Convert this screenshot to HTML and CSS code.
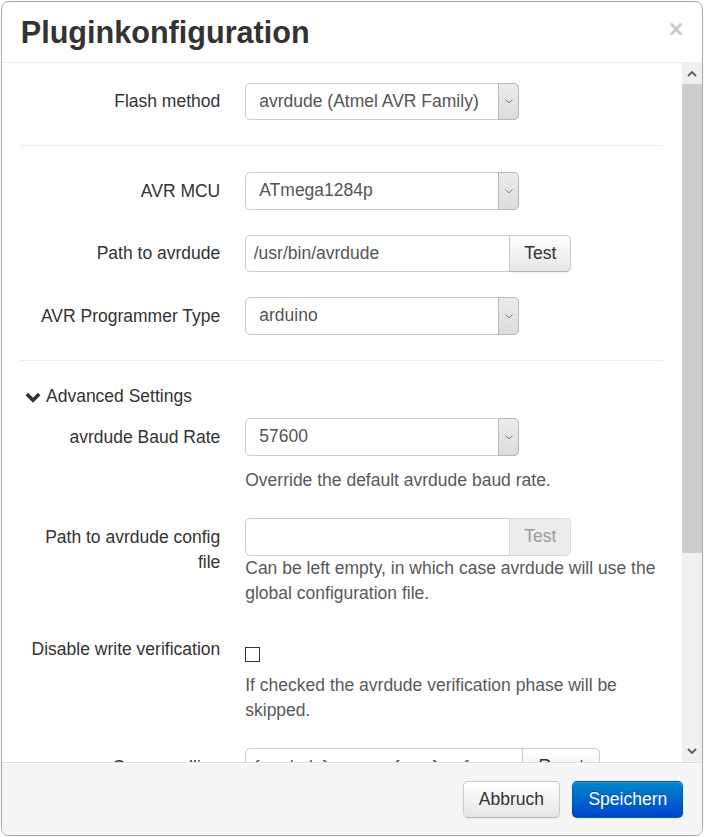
FILE: index.html
```html
<!DOCTYPE html>
<html lang="de">
<head>
<meta charset="utf-8">
<title>Pluginkonfiguration</title>
<link rel="stylesheet" href="styles.css">
</head>
<body>
<div class="modal">
  <div class="modal-header">
    <h3 class="modal-title">Pluginkonfiguration</h3>
    <button class="close" type="button">×</button>
  </div>

  <div class="modal-body">
    <div class="body-content">
      <form class="form-horizontal">
        <div class="control-group">
          <label class="control-label">Flash method</label>
          <div class="controls">
            <div class="select">
              <span class="select-value">avrdude (Atmel AVR Family)</span>
              <span class="select-arrow"><svg width="8" height="5" viewBox="0 0 8 5"><path d="M0.5 0.5 L4 4 L7.5 0.5" fill="none" stroke="#7d7d7d" stroke-width="1"/></svg></span>
            </div>
          </div>
        </div>

        <hr>

        <div class="control-group">
          <label class="control-label">AVR MCU</label>
          <div class="controls">
            <div class="select">
              <span class="select-value">ATmega1284p</span>
              <span class="select-arrow"><svg width="8" height="5" viewBox="0 0 8 5"><path d="M0.5 0.5 L4 4 L7.5 0.5" fill="none" stroke="#7d7d7d" stroke-width="1"/></svg></span>
            </div>
          </div>
        </div>

        <div class="control-group">
          <label class="control-label">Path to avrdude</label>
          <div class="controls">
            <div class="input-append">
              <input class="input" type="text" value="/usr/bin/avrdude">
              <button class="btn" type="button">Test</button>
            </div>
          </div>
        </div>

        <div class="control-group">
          <label class="control-label">AVR Programmer Type</label>
          <div class="controls">
            <div class="select">
              <span class="select-value">arduino</span>
              <span class="select-arrow"><svg width="8" height="5" viewBox="0 0 8 5"><path d="M0.5 0.5 L4 4 L7.5 0.5" fill="none" stroke="#7d7d7d" stroke-width="1"/></svg></span>
            </div>
          </div>
        </div>

        <hr>

        <div class="advanced-toggle">
          <svg class="toggle-icon" width="16" height="11" viewBox="0 0 16 11"><path d="M1.8 2 L8 8.2 L14.2 2" fill="none" stroke="#333" stroke-width="3.6"/></svg>
          <span>Advanced Settings</span>
        </div>

        <div class="control-group">
          <label class="control-label">avrdude Baud Rate</label>
          <div class="controls">
            <div class="select">
              <span class="select-value">57600</span>
              <span class="select-arrow"><svg width="8" height="5" viewBox="0 0 8 5"><path d="M0.5 0.5 L4 4 L7.5 0.5" fill="none" stroke="#7d7d7d" stroke-width="1"/></svg></span>
            </div>
            <span class="help help-after-select">Override the default avrdude baud rate.</span>
          </div>
        </div>

        <div class="control-group">
          <label class="control-label">Path to avrdude config file</label>
          <div class="controls">
            <div class="input-append">
              <input class="input" type="text" value="">
              <button class="btn" type="button" disabled>Test</button>
            </div>
            <span class="help">Can be left empty, in which case avrdude will use the global configuration file.</span>
          </div>
        </div>

        <div class="control-group">
          <label class="control-label">Disable write verification</label>
          <div class="controls controls-check">
            <input class="checkbox" type="checkbox">
            <span class="help help-after-check">If checked the avrdude verification phase will be skipped.</span>
          </div>
        </div>

        <div class="control-group">
          <label class="control-label">Commandline</label>
          <div class="controls">
            <div class="input-append">
              <input class="input input-wide" type="text" value="{avrdude} -v -q -p {mcu} -c {programmer} -P {port} -D -C {conffile} -b {baudrate} {disableverify} -U flash:w:{firmware}:i">
              <button class="btn btn-reset" type="button">Reset</button>
            </div>
          </div>
        </div>
      </form>
    </div>

    <div class="scrollbar">
      <div class="sb-btn"><svg width="10" height="6" viewBox="0 0 10 6"><path d="M1 5 L5 1 L9 5" fill="none" stroke="#5f5f5f" stroke-width="1.8"/></svg></div>
      <div class="sb-track"><div class="sb-thumb"></div></div>
      <div class="sb-btn sb-btn-down"><svg width="10" height="6" viewBox="0 0 10 6"><path d="M1 1 L5 5 L9 1" fill="none" stroke="#5f5f5f" stroke-width="1.8"/></svg></div>
    </div>
  </div>

  <div class="modal-footer">
    <button class="btn" type="button">Abbruch</button>
    <button class="btn btn-primary" type="button">Speichern</button>
  </div>
</div>
</body>
</html>
```

FILE: styles.css
```css
html, body {
  margin: 0;
  height: 100%;
  overflow: hidden;
  background: #fff;
}

body {
  font-family: "Liberation Sans", Arial, Helvetica, sans-serif;
  font-size: 17.5px;
  line-height: 25px;
  color: #333;
}

/* dialog window */
.modal {
  box-sizing: border-box;
  width: 702px;
  margin: 1px 0 0 1px;
  background: #fff;
  border: 1px solid #a5a5a5;
  border-radius: 7.5px;
  overflow: hidden;
}

.modal-header {
  display: flex;
  justify-content: space-between;
  align-items: flex-start;
  padding: 11.25px 18.75px;
  border-bottom: 1px solid #eee;
}

.modal-title {
  margin: 1px 0 -1px;
  font-size: 30.6px;
  line-height: 37.5px;
  font-weight: bold;
  color: #333;
}

.close {
  margin-top: 4px;
  padding: 0;
  border: 0;
  background: none;
  font-family: "Liberation Sans", Arial, sans-serif;
  font-size: 25px;
  line-height: 25px;
  font-weight: bold;
  color: #000;
  opacity: 0.2;
}

/* scrolling body */
.modal-body {
  display: flex;
  height: 699px;
}

.body-content {
  flex: 1;
  min-width: 0;
  overflow: hidden;
  padding: 19.75px 18.75px 18.75px 18.25px;
}

.form-horizontal {
  margin: 0;
}

.scrollbar {
  width: 20px;
  display: flex;
  flex-direction: column;
  background: #f0f0f0;
}

.sb-btn {
  height: 21px;
  display: flex;
  align-items: center;
  justify-content: center;
}

.sb-btn-down {
  height: 22px;
}

.sb-track {
  flex: 1;
}

.sb-thumb {
  height: 469px;
  background: #cdcdcd;
}

hr {
  margin: 25px 0;
  border: 0;
  border-top: 1px solid #eee;
  border-bottom: 1px solid #fff;
}

/* form rows */
.control-group {
  display: grid;
  grid-template-columns: 200px 1fr;
  column-gap: 25px;
  margin-bottom: 25px;
}

.control-label {
  padding-top: 6.25px;
  text-align: right;
}

.controls {
  min-width: 0;
}

.select {
  box-sizing: border-box;
  width: 274px;
  height: 37.5px;
  display: flex;
  border: 1px solid #ccc;
  border-radius: 5px;
  background: #fff;
  color: #555;
}

.select-value {
  flex: 1;
  padding-left: 13px;
  line-height: 35.5px;
  white-space: nowrap;
  overflow: hidden;
}

.select-arrow {
  box-sizing: border-box;
  width: 21px;
  margin: -1px -1px -1px 0;
  display: flex;
  align-items: center;
  justify-content: center;
  border: 1px solid #b7b7b7;
  border-radius: 0 5px 5px 0;
  background: linear-gradient(#ececec, #dcdcdc);
}

.input-append {
  display: flex;
}

.input {
  box-sizing: border-box;
  width: 265px;
  height: 37.5px;
  margin: 0;
  padding: 0 7.5px;
  border: 1px solid #ccc;
  border-radius: 5px 0 0 5px;
  background: #fff;
  color: #555;
  font-family: inherit;
  font-size: 17.5px;
  line-height: 35.5px;
  outline: none;
}

.input-wide {
  width: 278px;
}

.btn {
  box-sizing: border-box;
  height: 37.5px;
  margin: 0;
  padding: 0 15px;
  border: 1px solid #ccc;
  border-bottom-color: #b3b3b3;
  border-radius: 5px;
  background: linear-gradient(#fff, #e6e6e6);
  box-shadow: inset 0 1px 0 rgba(255, 255, 255, 0.2), 0 1px 2px rgba(0, 0, 0, 0.05);
  color: #333;
  font-family: inherit;
  font-size: 17.5px;
  line-height: 35.5px;
}

.input-append .btn {
  width: 62px;
  margin-left: -1px;
  padding: 0;
  border-radius: 0 5px 5px 0;
}

.input-append .btn-reset {
  width: 78px;
}

.btn:disabled {
  background: #ececec;
  border-color: #dadada;
  box-shadow: none;
  color: #9b9b9b;
}

.help {
  display: block;
  color: #595959;
}

.help-after-select {
  margin-top: 12.5px;
}

.controls-check {
  padding-top: 16px;
}

.checkbox {
  display: block;
  appearance: none;
  -webkit-appearance: none;
  box-sizing: border-box;
  width: 15px;
  height: 15px;
  margin: 0;
  border: 1px solid #333;
  background: #fff;
}

.help-after-check {
  margin-top: 11.5px;
}

.advanced-toggle {
  display: flex;
  align-items: center;
  gap: 5px;
  margin: -2.5px 0 9px;
  padding-left: 4.75px;
  color: #333;
}

.toggle-icon {
  margin-top: 2px;
}

/* footer */
.modal-footer {
  display: flex;
  justify-content: flex-end;
  gap: 12.5px;
  padding: 17.5px 18.75px 16.5px;
  background: #f5f5f5;
  border-top: 1px solid #ddd;
  box-shadow: inset 0 1px 0 #fff;
}

.btn-primary {
  background: linear-gradient(#0088cc, #0044cc);
  border-color: rgba(0, 0, 0, 0.1) rgba(0, 0, 0, 0.1) rgba(0, 0, 0, 0.25);
  color: #fff;
  text-shadow: 0 -1px 0 rgba(0, 0, 0, 0.25);
}
```
